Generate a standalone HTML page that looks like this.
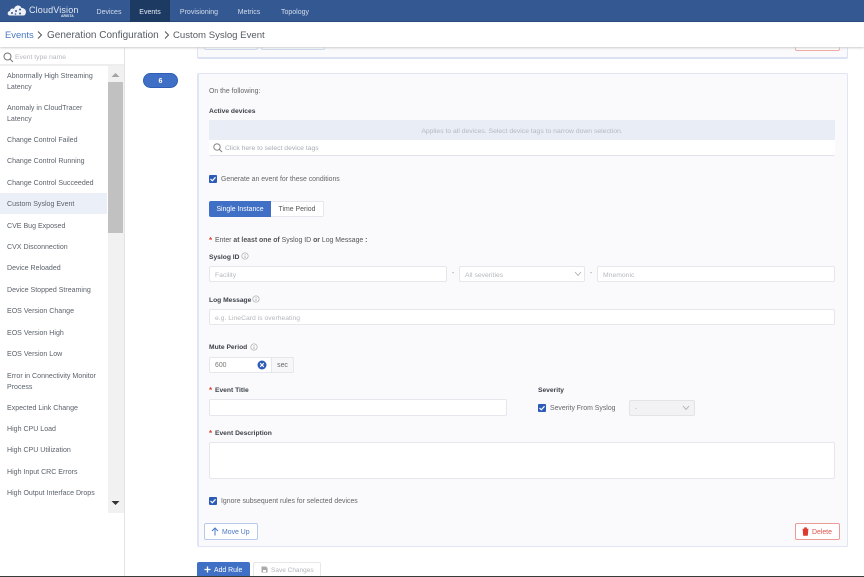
<!DOCTYPE html>
<html>
<head>
<meta charset="utf-8">
<style>
html,body{margin:0;padding:0;background:#fff;}
#p{position:relative;width:864px;height:577px;overflow:hidden;background:#fff;font-family:"Liberation Sans",sans-serif;color:#555;font-size:6.9px;filter:blur(.3px);}
#p div,#p span.a{position:absolute;white-space:nowrap;box-sizing:border-box;}
#p svg{position:absolute;}
.nav{top:0;height:22px;line-height:25px;color:#d5deec;font-size:7px;text-align:center;}
.it{left:7px;margin-top:1px;color:#5c636b;font-size:7.05px;line-height:10.5px;}
.lb{color:#3d4148;font-size:6.7px;font-weight:bold;}
.inp{background:#fff;border:1px solid #e6e7ec;border-radius:2px;}
.ph{color:#b5b8bd;font-size:6.8px;}
.cb{width:8px;height:8px;background:#2c5cb8;border-radius:1px;}
.req{color:#e0442e;font-size:8px;font-weight:bold;}
</style>
</head>
<body>
<div id="p">
<!-- nav -->
<div style="left:0;top:0;width:864px;height:22px;background:#345892;border-bottom:1px solid #2a4a80;"></div>
<div style="left:130px;top:0;width:40px;height:22px;background:#1d3a62;"></div>
<svg style="left:7px;top:3px" width="20" height="13" viewBox="0 0 20 13"><path d="M2.500 12.500 C0 12.500 0 8 3 8 C3 5.500 6 5 7 6 C8 2 13 1 14.500 5 C18 5 20 8 18.500 11 C18 12 17.500 12.500 16.500 12.500Z" fill="#eef2f8"/><g fill="#345892"><circle cx="5" cy="10" r="1"/><circle cx="9" cy="8" r="1"/><circle cx="13" cy="6.500" r="1"/><circle cx="13" cy="10.500" r="1"/><circle cx="8.500" cy="11" r=".8"/></g></svg>
<div style="left:29px;top:3px;color:#e4eaf3;font-size:9px;line-height:15px;letter-spacing:.15px;">CloudVision</div>
<div style="left:61px;top:14px;color:#dfe6f1;font-size:3.500px;line-height:4px;font-weight:bold;">ARISTA</div>
<div class="nav" style="left:90px;width:38px;">Devices</div>
<div class="nav" style="left:130px;width:40px;color:#e8edf5;">Events</div>
<div class="nav" style="left:173px;width:52px;">Provisioning</div>
<div class="nav" style="left:231px;width:36px;">Metrics</div>
<div class="nav" style="left:275px;width:40px;">Topology</div>
<!-- breadcrumb -->
<div style="left:0;top:23px;width:864px;height:24px;background:#fff;box-shadow:0 1px 2px #ccc;z-index:5;"></div>
<div style="left:5px;top:27px;font-size:9.400px;line-height:15px;color:#4a78c4;z-index:6;">Events</div>
<div style="left:47px;top:28px;font-size:10px;line-height:16px;color:#555b62;z-index:6;">Generation Configuration</div>
<div style="left:173px;top:28px;font-size:9.600px;line-height:15px;color:#555b62;z-index:6;">Custom Syslog Event</div>
<svg style="left:37px;top:31px;z-index:6" width="6" height="8"><path d="M1 .5 L4.500 4 L1 7.500" fill="none" stroke="#555" stroke-width="1"/></svg>
<svg style="left:164px;top:31px;z-index:6" width="6" height="8"><path d="M1 .5 L4.500 4 L1 7.500" fill="none" stroke="#555" stroke-width="1"/></svg>
<!-- sidebar -->
<div style="left:124px;top:47px;width:1px;height:530px;background:#e3e3e3;"></div>
<div style="left:0;top:64px;width:124px;height:2px;background:#eeeeee;"></div>
<svg style="left:3px;top:52px" width="11" height="11"><circle cx="4.500" cy="4.500" r="3.500" fill="none" stroke="#777" stroke-width="1"/><path d="M7 7 L10 10" stroke="#777" stroke-width="1"/></svg>
<div class="ph" style="left:15px;top:53px;line-height:9px;">Event type name</div>
<div style="left:108px;top:66px;width:16px;height:447px;background:#f1f1f1;"></div>
<div style="left:108px;top:82px;width:15px;height:151px;background:#c1c1c1;"></div>
<svg style="left:111px;top:72px" width="9" height="6"><path d="M.5 5 L4.500 1 L8.500 5Z" fill="#a3a3a3"/></svg>
<svg style="left:111px;top:500px" width="9" height="6"><path d="M.5 1 L4.500 5 L8.500 1Z" fill="#333"/></svg>
<div style="left:0;top:193px;width:107px;height:21px;background:#eaeff8;"></div>
<div class="it" style="top:71px;">Abnormally High Streaming<br>Latency</div>
<div class="it" style="top:103px;">Anomaly in CloudTracer<br>Latency</div>
<div class="it" style="top:135px;">Change Control Failed</div>
<div class="it" style="top:156px;">Change Control Running</div>
<div class="it" style="top:178px;">Change Control Succeeded</div>
<div class="it" style="top:199px;">Custom Syslog Event</div>
<div class="it" style="top:221px;">CVE Bug Exposed</div>
<div class="it" style="top:242px;">CVX Disconnection</div>
<div class="it" style="top:263px;">Device Reloaded</div>
<div class="it" style="top:285px;">Device Stopped Streaming</div>
<div class="it" style="top:306px;">EOS Version Change</div>
<div class="it" style="top:328px;">EOS Version High</div>
<div class="it" style="top:349px;">EOS Version Low</div>
<div class="it" style="top:371px;">Error in Connectivity Monitor<br>Process</div>
<div class="it" style="top:403px;">Expected Link Change</div>
<div class="it" style="top:424px;">High CPU Load</div>
<div class="it" style="top:445px;">High CPU Utilization</div>
<div class="it" style="top:467px;">High Input CRC Errors</div>
<div class="it" style="top:488px;">High Output Interface Drops</div>
<!-- previous card -->
<div style="left:197px;top:40px;width:651px;height:19px;background:#fafafd;border:1px solid #dbe2f3;border-bottom-width:2px;border-radius:2px;"></div>
<div style="left:204px;top:40px;width:54px;height:10px;background:#fff;border:1px solid #cdd9ef;border-radius:2px;"></div>
<div style="left:261px;top:40px;width:64px;height:10px;background:#fff;border:1px solid #cdd9ef;border-radius:2px;"></div>
<div style="left:795px;top:40px;width:45px;height:11px;background:#fff;border:1px solid #eeaaa6;border-radius:2px;"></div>
<!-- badge -->
<div style="left:143px;top:73px;width:35px;height:15px;background:#3f70c6;border:1px solid #2f5fb4;border-radius:8px;color:#fff;font-size:7px;font-weight:bold;line-height:15px;text-align:center;">6</div>
<!-- card -->
<div style="left:197px;top:73px;width:651px;height:474px;background:#fafafd;border:1px solid #dfe5f5;border-left-width:2px;border-radius:2px;"></div>
<div style="left:209px;top:86px;font-size:6.900px;line-height:12px;color:#666;">On the following:</div>
<div class="lb" style="left:209px;top:106px;line-height:11px;">Active devices</div>
<div style="left:209px;top:120px;width:626px;height:20px;background:#e9edf6;"></div>
<div class="ph" style="left:209px;top:125px;width:626px;text-align:center;line-height:14px;color:#b4b9c2;">Applies to all devices. Select device tags to narrow down selection.</div>
<div style="left:209px;top:140px;width:626px;height:16px;background:#fff;border-bottom:1px solid #e2e3e8;border-radius:0 0 2px 2px;"></div>
<svg style="left:213px;top:143px" width="10" height="10"><circle cx="4" cy="4" r="3.200" fill="none" stroke="#777" stroke-width=".9"/><path d="M6.300 6.300 L9 9" stroke="#777" stroke-width=".9"/></svg>
<div class="ph" style="left:225px;top:143px;line-height:12px;color:#a9adb3;">Click here to select device tags</div>
<div class="cb" style="left:209px;top:175px;"></div>
<svg style="left:209px;top:175px" width="8" height="8"><path d="M1.500 4 L3.300 5.800 L6.500 2.300" fill="none" stroke="#fff" stroke-width="1.200"/></svg>
<div style="left:221px;top:174px;line-height:11px;color:#666;">Generate an event for these conditions</div>
<div style="left:209px;top:201px;width:62px;height:16px;background:#3f70c6;border-radius:2px 0 0 2px;color:#fff;line-height:17px;text-align:center;">Single Instance</div>
<div style="left:271px;top:201px;width:53px;height:16px;background:#fff;border:1px solid #e6e7ec;border-left:0;border-radius:0 2px 2px 0;color:#555;line-height:16px;text-align:center;">Time Period</div>
<div class="req" style="left:209px;top:236px;line-height:10px;">*</div>
<div style="left:215px;top:235px;line-height:11px;color:#555;">Enter <b>at least one of</b> Syslog ID <b>or</b> Log Message <b>:</b></div>
<div class="lb" style="left:209px;top:252px;line-height:11px;">Syslog ID</div>
<svg style="left:241px;top:252px" width="8" height="8"><circle cx="4" cy="4" r="3.200" fill="none" stroke="#aaa" stroke-width=".7"/><path d="M4 3.500V6M4 2V2.800" stroke="#999" stroke-width=".7"/></svg>
<div class="inp" style="left:209px;top:266px;width:238px;height:16px;"></div>
<div class="ph" style="left:215px;top:269px;line-height:14px;">Facility</div>
<div style="left:452px;top:268px;color:#888;line-height:12px;">-</div>
<div class="inp" style="left:459px;top:266px;width:126px;height:16px;"></div>
<div class="ph" style="left:465px;top:269px;line-height:14px;">All severities</div>
<svg style="left:574px;top:271px" width="8" height="6"><path d="M1 1 L4 4.500 L7 1" fill="none" stroke="#aaa" stroke-width=".8"/></svg>
<div style="left:590px;top:268px;color:#888;line-height:12px;">-</div>
<div class="inp" style="left:597px;top:266px;width:238px;height:16px;"></div>
<div class="ph" style="left:603px;top:269px;line-height:14px;">Mnemonic</div>
<div class="lb" style="left:209px;top:295px;line-height:11px;">Log Message</div>
<svg style="left:252px;top:295px" width="8" height="8"><circle cx="4" cy="4" r="3.200" fill="none" stroke="#aaa" stroke-width=".7"/><path d="M4 3.500V6M4 2V2.800" stroke="#999" stroke-width=".7"/></svg>
<div class="inp" style="left:209px;top:309px;width:626px;height:16px;"></div>
<div class="ph" style="left:215px;top:312px;line-height:14px;">e.g. LineCard is overheating</div>
<div class="lb" style="left:209px;top:342px;line-height:11px;">Mute Period</div>
<svg style="left:250px;top:343px" width="8" height="8"><circle cx="4" cy="4" r="3.200" fill="none" stroke="#aaa" stroke-width=".7"/><path d="M4 3.500V6M4 2V2.800" stroke="#999" stroke-width=".7"/></svg>
<div class="inp" style="left:209px;top:357px;width:63px;height:16px;"></div>
<div style="left:271px;top:357px;width:23px;height:16px;background:#f7f7f9;border:1px solid #e6e7ec;border-radius:0 2px 2px 0;color:#666;line-height:16px;text-align:center;">sec</div>
<div style="left:215px;top:360px;line-height:12px;color:#777;">600</div>
<svg style="left:257px;top:360px" width="10" height="10"><circle cx="5" cy="5" r="4.500" fill="#2c5cb8"/><path d="M3.200 3.200 L6.800 6.800 M6.800 3.200 L3.200 6.800" stroke="#fff" stroke-width="1.100"/></svg>
<div class="req" style="left:209px;top:386px;line-height:10px;">*</div>
<div class="lb" style="left:215px;top:385px;line-height:11px;">Event Title</div>
<div class="inp" style="left:209px;top:399px;width:298px;height:17px;"></div>
<div class="lb" style="left:538px;top:385px;line-height:11px;">Severity</div>
<div class="cb" style="left:538px;top:404px;"></div>
<svg style="left:538px;top:404px" width="8" height="8"><path d="M1.500 4 L3.300 5.800 L6.500 2.300" fill="none" stroke="#fff" stroke-width="1.200"/></svg>
<div style="left:550px;top:403px;line-height:11px;color:#666;">Severity From Syslog</div>
<div style="left:629px;top:400px;width:66px;height:16px;background:#f2f2f4;border:1px solid #e2e3e7;border-radius:2px;"></div>
<div class="ph" style="left:635px;top:403px;line-height:12px;">-</div>
<svg style="left:682px;top:405px" width="8" height="6"><path d="M1 1 L4 4.500 L7 1" fill="none" stroke="#aaa" stroke-width=".8"/></svg>
<div class="req" style="left:209px;top:429px;line-height:10px;">*</div>
<div class="lb" style="left:215px;top:428px;line-height:11px;">Event Description</div>
<div class="inp" style="left:209px;top:442px;width:626px;height:37px;"></div>
<div class="cb" style="left:209px;top:497px;"></div>
<svg style="left:209px;top:497px" width="8" height="8"><path d="M1.500 4 L3.300 5.800 L6.500 2.300" fill="none" stroke="#fff" stroke-width="1.200"/></svg>
<div style="left:221px;top:496px;line-height:11px;color:#666;">Ignore subsequent rules for selected devices</div>
<div style="left:204px;top:523px;width:54px;height:17px;background:#fff;border:1px solid #b9c9ea;border-radius:2px;color:#4a78c4;line-height:17px;padding-left:17px;">Move Up</div>
<svg style="left:211px;top:527px" width="8" height="9"><path d="M4 8.500 V1 M1 4 L4 1 L7 4" fill="none" stroke="#4a78c4" stroke-width="1"/></svg>
<div style="left:795px;top:523px;width:45px;height:17px;background:#fff;border:1px solid #eb9b96;border-radius:2px;color:#d9534c;line-height:17px;padding-left:16px;">Delete</div>
<svg style="left:802px;top:527px" width="7" height="9"><path d="M.5 2 H6.500 M2.500 2 V.7 H4.500 V2 M1 2.500 H6 L5.500 8.500 H1.500Z" fill="#dd3b30" stroke="#dd3b30" stroke-width=".6"/></svg>
<!-- bottom buttons -->
<div style="left:197px;top:562px;width:53px;height:15px;background:#3f70c6;border-radius:2px 2px 0 0;color:#fff;line-height:17px;padding-left:17px;">Add Rule</div>
<svg style="left:204px;top:566px" width="7" height="7"><path d="M3.500 .5 V6.500 M.5 3.500 H6.500" stroke="#fff" stroke-width="1.300"/></svg>
<div style="left:253px;top:562px;width:68px;height:15px;background:#fff;border:1px solid #e6e7ea;border-bottom:0;border-radius:2px 2px 0 0;color:#b4b7bb;font-size:6.500px;line-height:16px;padding-left:17px;">Save Changes</div>
<svg style="left:261px;top:566px" width="7" height="7"><path d="M.5 .5 H5 L6.500 2 V6.500 H.5Z" fill="#aaa"/><rect x="2" y="4" width="3" height="2" fill="#fff"/></svg>
<div style="left:0;top:576px;width:864px;height:1px;background:#3a3a3a;"></div>
</div>
</body>
</html>
